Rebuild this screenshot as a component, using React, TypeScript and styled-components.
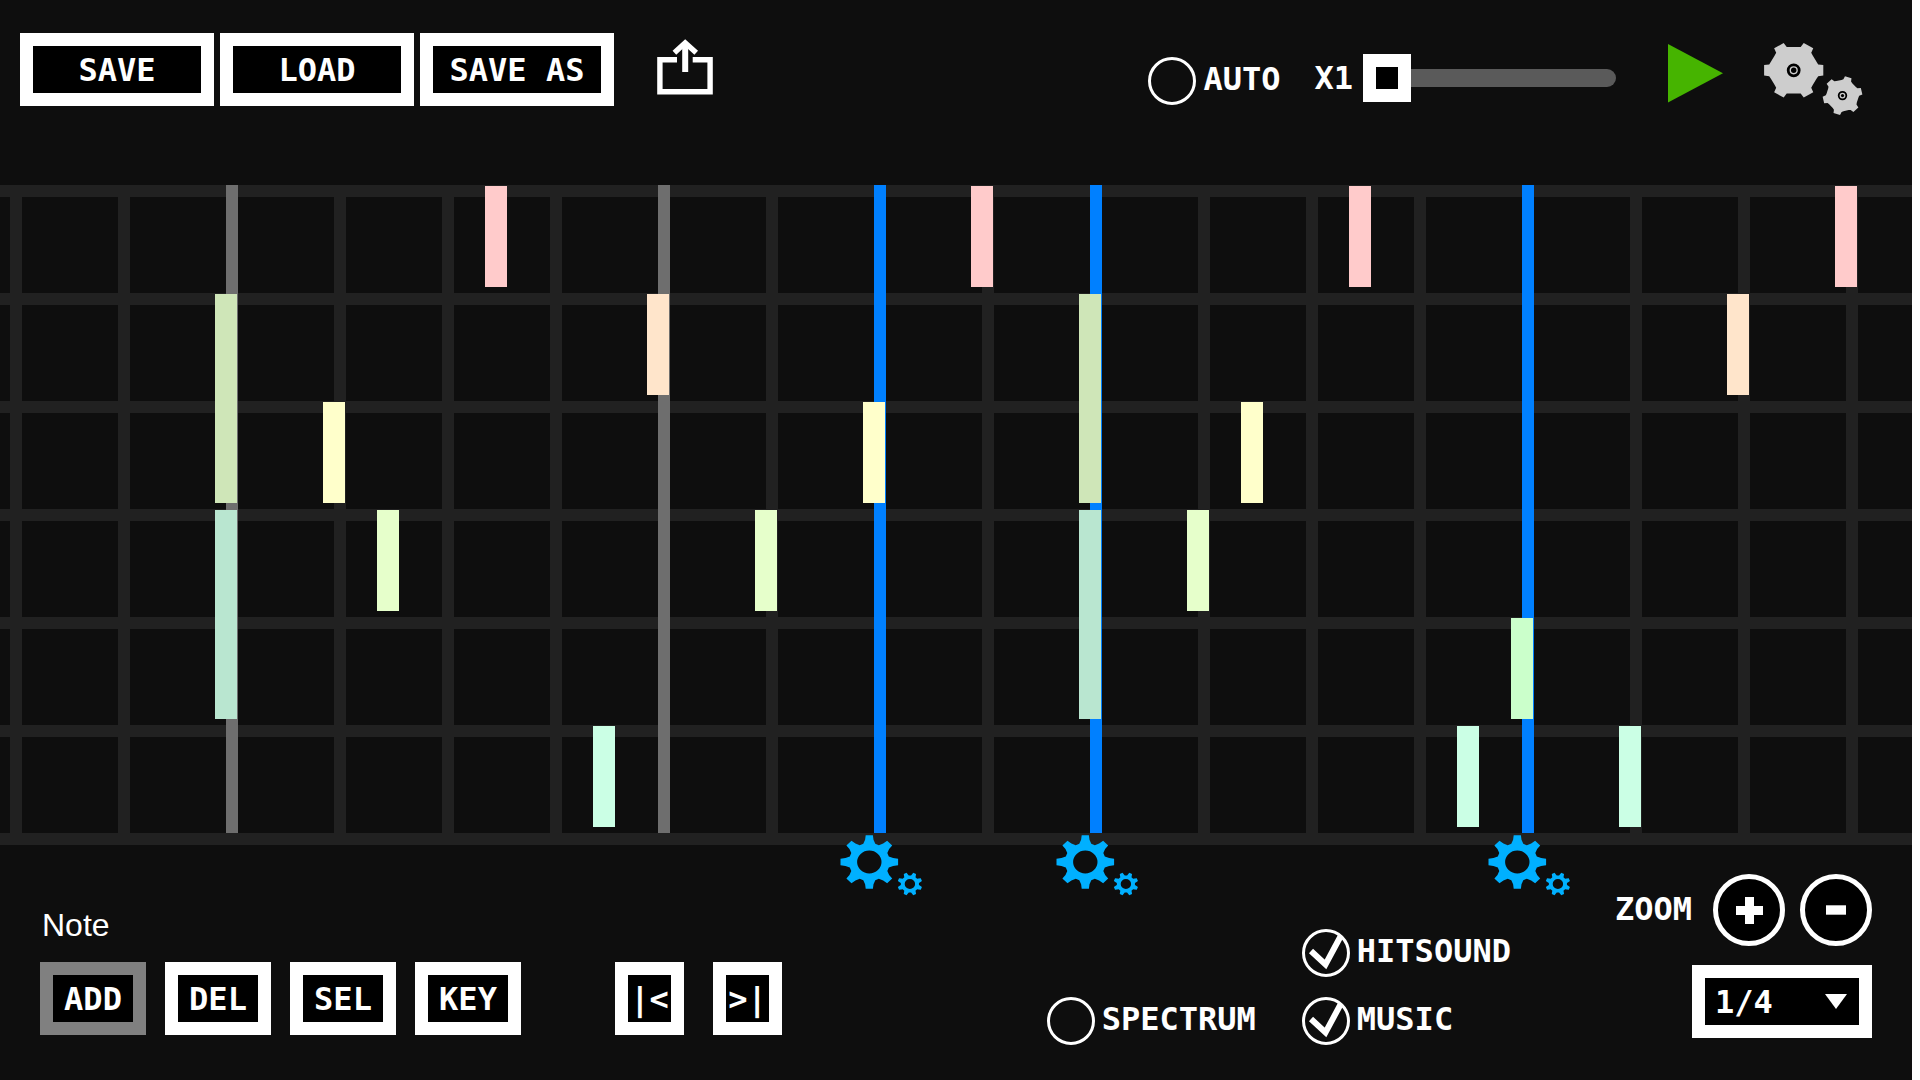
import React, { useState } from 'react';
import styled, { createGlobalStyle } from 'styled-components';

const display = "'DejaVu Sans Mono', monospace";

const GlobalStyle = createGlobalStyle`
  * { box-sizing: border-box; }
  body { margin: 0; background: #fff; }
  button, input, select { margin: 0; }
`;

const Page = styled.div`
  display: flex;
  flex-direction: column;
  min-height: 100vh;
  margin-right: 8px;
  background: #0e0e0e;
  color: #fff;
  font: bold 32px/40px ${display};
`;

const Header = styled.header`
  display: flex;
  align-items: flex-start;
  justify-content: space-between;
  padding: 33px 49px 0 20px;
  min-height: 185px;
`;

const FileBar = styled.div`
  display: flex;
  align-items: flex-start;
  gap: 6px;
`;

const FrameButton = styled.button<{ $width: number; $active?: boolean }>`
  width: ${(p) => p.$width}px;
  height: 73px;
  padding: 0;
  border: 13px solid ${(p) => (p.$active ? '#808080' : '#fff')};
  background: #000;
  color: #fff;
  font: bold 32px/40px ${display};
  white-space: nowrap;
  cursor: pointer;
`;

const IconButton = styled.button<{ $top: number }>`
  display: block;
  margin-top: ${(p) => p.$top}px;
  padding: 0;
  border: 0;
  background: none;
  cursor: pointer;
  svg { display: block; }
`;

const ShareSlot = styled.div`
  margin-left: 37px;
`;

const Playback = styled.div`
  display: flex;
  align-items: flex-start;
`;

const AutoSlot = styled.div`
  margin: 24px 34px 0 0;
`;

const Speed = styled.label`
  display: flex;
  align-items: center;
  gap: 10px;
  margin: 21px 52px 0 0;
`;

const Range = styled.input`
  appearance: none;
  width: 253px;
  height: 48px;
  background: none;
  &::-webkit-slider-runnable-track {
    height: 18px;
    border-radius: 9px;
    background: #5a5a5a;
  }
  &::-webkit-slider-thumb {
    appearance: none;
    width: 48px;
    height: 48px;
    margin-top: -15px;
    border: 13px solid #fff;
    background: #000;
  }
`;

const Transport = styled.div`
  display: flex;
  align-items: flex-start;
  gap: 41px;
`;

const Toggle = styled.label`
  display: flex;
  align-items: center;
  gap: 7px;
  cursor: pointer;
`;

const ToggleText = styled.span`
  padding-bottom: 4px;
`;

const CheckBox = styled.span`
  display: grid;
  width: 48px;
  height: 48px;
  > * { grid-area: 1 / 1; }
  svg { pointer-events: none; }
`;

const CheckInput = styled.input`
  appearance: none;
  width: 48px;
  height: 48px;
  border: 3px solid #fff;
  border-radius: 50%;
`;

const Timeline = styled.main`
  display: grid;
  grid-template-rows: repeat(6, 108px) 12px;
  grid-auto-columns: 54px;
  padding-left: 215px;
  overflow-x: clip;
  background:
    repeating-linear-gradient(to bottom, #212121 0 12px, transparent 12px 108px),
    repeating-linear-gradient(to right, #212121 0 12px, transparent 12px 108px) 10px 0,
    linear-gradient(to right, #0e0e0e, #0e0e0e);
`;

const BarLine = styled.div<{ $step: number; $color: string }>`
  grid-row: 1 / 7;
  grid-column: ${(p) => p.$step + 1};
  width: 12px;
  margin-left: 11px;
  background: ${(p) => p.$color};
`;

const Note = styled.div<{ $step: number; $lane: number; $span: number; $color: string }>`
  grid-row: ${(p) => p.$lane} / span ${(p) => p.$span};
  grid-column: ${(p) => p.$step + 1};
  width: 22px;
  margin: 1px 0 6px;
  background: ${(p) => p.$color};
  z-index: 1;
`;

const Marker = styled.button<{ $step: number }>`
  grid-row: 7;
  grid-column: ${(p) => p.$step + 1};
  align-self: start;
  width: 82px;
  height: 64px;
  margin-left: -23px;
  padding: 1px 0 0;
  border: 0;
  background: none;
  cursor: pointer;
  svg { display: block; }
`;

const Footer = styled.footer`
  display: flex;
  flex: 1;
  align-items: flex-end;
  justify-content: space-between;
  padding: 28px 40px 35px;
`;

const EditPanel = styled.section`
  padding-bottom: 10px;
`;

const ModeName = styled.h2`
  margin: 0 0 17px 2px;
  font: 32px/40px 'Liberation Sans', Arial, sans-serif;
`;

const EditRow = styled.div`
  display: flex;
  gap: 94px;
  margin-top: 14px;
`;

const ButtonSet = styled.div<{ $gap: number }>`
  display: flex;
  gap: ${(p) => p.$gap}px;
`;

const RightPanel = styled.div`
  display: flex;
  align-items: flex-end;
`;

const SpectrumSlot = styled.div`
  margin-right: 46px;
`;

const SoundPanel = styled.div`
  display: flex;
  flex-direction: column;
  gap: 20px;
`;

const ZoomPanel = styled.section`
  display: flex;
  flex-direction: column;
  align-items: flex-end;
  gap: 19px;
  margin-left: 104px;
  padding-bottom: 7px;
`;

const ZoomRow = styled.div`
  display: flex;
  align-items: center;
  gap: 15px;
`;

const ZoomName = styled.span`
  margin-right: 6px;
  padding-bottom: 2px;
`;

const RoundButton = styled.button`
  display: grid;
  place-items: center;
  width: 72px;
  height: 72px;
  padding: 0;
  border: 5px solid #fff;
  border-radius: 50%;
  background: #000;
  cursor: pointer;
`;

const SelectBox = styled.div`
  display: grid;
  align-items: center;
  width: 180px;
  > * { grid-area: 1 / 1; }
  svg {
    justify-self: end;
    margin-right: 25px;
    pointer-events: none;
  }
`;

const Select = styled.select`
  appearance: none;
  width: 180px;
  height: 73px;
  padding: 0 0 0 10px;
  border: 13px solid #fff;
  border-radius: 0;
  background: #000;
  color: #fff;
  font: bold 32px/40px ${display};
`;

type GearShape = {
  cx: number; cy: number; teeth: number; outer: number; root: number;
  tip: number; base: number; turn: number; squash: number;
};

function gearPath(g: GearShape) {
  const points: string[] = [];
  for (let i = 0; i < g.teeth; i += 1) {
    const a = ((g.turn + (i * 360) / g.teeth) * Math.PI) / 180;
    const shoulder = g.outer - 5 * (g.outer / 29);
    const corners = [
      [g.root, -g.base],
      [shoulder, -g.tip - 0.6],
      [g.outer, -g.tip],
      [g.outer, g.tip],
      [shoulder, g.tip + 0.6],
      [g.root, g.base],
    ];
    corners.forEach(([x, y]) => {
      const px = g.cx + x * Math.cos(a) - y * Math.sin(a);
      const py = g.cy + (x * Math.sin(a) + y * Math.cos(a)) * g.squash;
      points.push(`${px.toFixed(2)} ${py.toFixed(2)}`);
    });
  }
  return `M${points.join('L')}Z`;
}

const hole = (cx: number, cy: number, rx: number, ry: number) =>
  `M${cx - rx} ${cy}a${rx} ${ry} 0 1 0 ${rx * 2} 0a${rx} ${ry} 0 1 0 ${-rx * 2} 0Z`;

const SettingsIcon = () => (
  <svg width="99" height="73" viewBox="0 0 99 73" aria-hidden="true">
    <path fill="#cdcdcd" d={gearPath({ cx: 29.7, cy: 27.3, teeth: 6, outer: 29.6, root: 22.8, tip: 5.5, base: 8.8, turn: 0, squash: 0.96 })} />
    <circle cx="29.7" cy="27.3" r="5.5" fill="none" stroke="#000" strokeWidth="2.8" />
    <circle cx="29.7" cy="27.3" r="2.7" fill="#000" />
    <path fill="#cdcdcd" d={gearPath({ cx: 78.5, cy: 52.6, teeth: 6, outer: 19.6, root: 15, tip: 3.4, base: 5.6, turn: -13, squash: 0.98 })} />
    <circle cx="78.5" cy="52.6" r="3.8" fill="none" stroke="#000" strokeWidth="1.8" />
    <circle cx="78.5" cy="52.6" r="1.6" fill="#000" />
  </svg>
);

const MarkerIcon = () => (
  <svg width="82" height="61" viewBox="0 0 82 61" aria-hidden="true">
    <path
      fill="#00b0ff"
      fillRule="evenodd"
      d={gearPath({ cx: 29.3, cy: 27, teeth: 8, outer: 28.8, root: 19.5, tip: 3.6, base: 6, turn: 0, squash: 0.93 }) + hole(29.3, 27, 12.2, 11.4)}
    />
    <path
      fill="#00b0ff"
      fillRule="evenodd"
      d={gearPath({ cx: 69.9, cy: 49, teeth: 8, outer: 12.4, root: 8.8, tip: 1.5, base: 2.4, turn: 22.5, squash: 0.93 }) + hole(69.9, 49, 5.2, 5)}
    />
  </svg>
);

const ShareIcon = () => (
  <svg width="56" height="56" viewBox="0 0 56 56" fill="none" stroke="#fff" aria-hidden="true">
    <path strokeWidth="5.4" d="M20 20.7H2.9V52.7H53.1V20.7H35.7" />
    <path strokeWidth="6" d="M28.2 33V5" />
    <path strokeWidth="5.4" d="M17.4 13.8L28.2 3.8L39.2 13.8" />
  </svg>
);

const gray = '#6e6e6e';
const blue = '#0080ff';
const barLines = [
  { step: 0, color: gray },
  { step: 8, color: gray },
  { step: 12, color: blue },
  { step: 16, color: blue },
  { step: 24, color: blue },
];

const laneColors = ['#ffcbcb', '#ffe5cb', '#ffffcb', '#e6ffcb', '#cbffcb', '#cbffe5'];
const notes = [
  { step: 0, lane: 2, span: 2, color: '#cfe6b8' },
  { step: 0, lane: 4, span: 2, color: '#b9e6d0' },
  { step: 2, lane: 3 },
  { step: 3, lane: 4 },
  { step: 5, lane: 1 },
  { step: 7, lane: 6 },
  { step: 8, lane: 2 },
  { step: 10, lane: 4 },
  { step: 12, lane: 3 },
  { step: 14, lane: 1 },
  { step: 16, lane: 2, span: 2, color: '#cfe6b8' },
  { step: 16, lane: 4, span: 2, color: '#b9e6d0' },
  { step: 18, lane: 4 },
  { step: 19, lane: 3 },
  { step: 21, lane: 1 },
  { step: 23, lane: 6 },
  { step: 24, lane: 5 },
  { step: 26, lane: 6 },
  { step: 28, lane: 2 },
  { step: 30, lane: 1 },
];

function RoundToggle({ label, initial = false }: { label: string; initial?: boolean }) {
  const [on, setOn] = useState(initial);
  return (
    <Toggle>
      <CheckBox>
        <CheckInput type="checkbox" checked={on} onChange={() => setOn(!on)} />
        {on && (
          <svg width="48" height="48" viewBox="0 0 48 48" fill="none" stroke="#fff" strokeWidth="6" aria-hidden="true">
            <path d="M9 22L23.5 35.5L38.5 7.5" />
          </svg>
        )}
      </CheckBox>
      <ToggleText>{label}</ToggleText>
    </Toggle>
  );
}

export default function App() {
  const [speed, setSpeed] = useState(1);
  const [mode, setMode] = useState('ADD');
  return (
    <>
      <GlobalStyle />
      <Page>
        <Header>
          <FileBar>
            <FrameButton $width={194}>SAVE</FrameButton>
            <FrameButton $width={194}>LOAD</FrameButton>
            <FrameButton $width={194}>SAVE AS</FrameButton>
            <ShareSlot>
              <IconButton $top={6} aria-label="Share"><ShareIcon /></IconButton>
            </ShareSlot>
          </FileBar>
          <Playback>
            <AutoSlot><RoundToggle label="AUTO" /></AutoSlot>
            <Speed>
              <span>X{speed}</span>
              <Range type="range" min={1} max={8} value={speed} onChange={(e) => setSpeed(Number(e.target.value))} />
            </Speed>
            <Transport>
              <IconButton $top={11} aria-label="Play">
                <svg width="55" height="59" viewBox="0 0 55 59" aria-hidden="true"><path fill="#46b400" d="M0 0L55 29.3L0 58.6Z" /></svg>
              </IconButton>
              <IconButton $top={10} aria-label="Settings"><SettingsIcon /></IconButton>
            </Transport>
          </Playback>
        </Header>
        <Timeline>
          {barLines.map((b) => <BarLine key={b.step} $step={b.step} $color={b.color} />)}
          {notes.map((n) => (
            <Note key={`${n.step}-${n.lane}`} $step={n.step} $lane={n.lane} $span={n.span ?? 1} $color={n.color ?? laneColors[n.lane - 1]} />
          ))}
          {barLines.filter((b) => b.color === blue).map((b) => (
            <Marker key={b.step} $step={b.step} aria-label="Marker settings"><MarkerIcon /></Marker>
          ))}
        </Timeline>
        <Footer>
          <EditPanel>
            <ModeName>Note</ModeName>
            <EditRow>
              <ButtonSet $gap={19}>
                {['ADD', 'DEL', 'SEL', 'KEY'].map((m) => (
                  <FrameButton key={m} $width={106} $active={m === mode} onClick={() => setMode(m)}>{m}</FrameButton>
                ))}
              </ButtonSet>
              <ButtonSet $gap={29}>
                <FrameButton $width={69}>|&lt;</FrameButton>
                <FrameButton $width={69}>&gt;|</FrameButton>
              </ButtonSet>
            </EditRow>
          </EditPanel>
          <RightPanel>
            <SpectrumSlot><RoundToggle label="SPECTRUM" /></SpectrumSlot>
            <SoundPanel>
              <RoundToggle label="HITSOUND" initial />
              <RoundToggle label="MUSIC" initial />
            </SoundPanel>
            <ZoomPanel>
              <ZoomRow>
                <ZoomName>ZOOM</ZoomName>
                <RoundButton aria-label="Zoom in">
                  <svg width="27" height="27" viewBox="0 0 27 27" aria-hidden="true"><path d="M13.5 0V27M0 13.5H27" stroke="#fff" strokeWidth="9" /></svg>
                </RoundButton>
                <RoundButton aria-label="Zoom out">
                  <svg width="20" height="10" viewBox="0 0 20 10" aria-hidden="true"><path d="M0 5H20" stroke="#fff" strokeWidth="9.4" /></svg>
                </RoundButton>
              </ZoomRow>
              <SelectBox>
                <Select aria-label="Beat division" defaultValue="1/4">
                  <option>1/2</option>
                  <option>1/4</option>
                  <option>1/8</option>
                </Select>
                <svg width="22" height="15" viewBox="0 0 22 15" aria-hidden="true"><path fill="#fff" d="M0 0H22L11 15Z" /></svg>
              </SelectBox>
            </ZoomPanel>
          </RightPanel>
        </Footer>
      </Page>
    </>
  );
}
